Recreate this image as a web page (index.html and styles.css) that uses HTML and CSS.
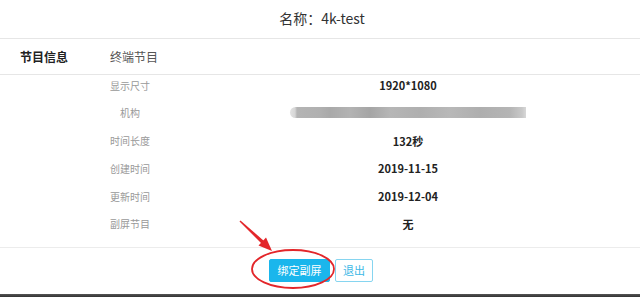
FILE: index.html
```html
<!DOCTYPE html>
<html lang="zh-CN">
<head>
<meta charset="utf-8">
<title>名称：4k-test</title>
<link rel="stylesheet" href="styles.css">
</head>
<body>
<div class="dialog">
  <div class="header">名称：4k-test</div>
  <div class="section">
    <span class="section-title">节目信息</span>
    <span class="section-sub">终端节目</span>
  </div>
  <div class="list">
    <div class="row"><span class="label">显示尺寸</span><span class="value">1920*1080</span></div>
    <div class="row"><span class="label">机构</span><span class="value"><span class="blur"></span></span></div>
    <div class="row"><span class="label">时间长度</span><span class="value">132秒</span></div>
    <div class="row"><span class="label">创建时间</span><span class="value">2019-11-15</span></div>
    <div class="row"><span class="label">更新时间</span><span class="value">2019-12-04</span></div>
    <div class="row"><span class="label">副屏节目</span><span class="value">无</span></div>
  </div>
  <div class="footer">
    <button class="btn btn-primary">绑定副屏</button>
    <button class="btn btn-ghost">退出</button>
  </div>
  <div class="shadow-bar"></div>
  <svg class="annot" width="640" height="297" viewBox="0 0 640 297">
    <ellipse cx="293" cy="269" rx="41" ry="19" fill="none" stroke="#e3262a" stroke-width="1.8"/>
    <polygon points="239.5,221.5 240.5,220.5 264,241 262,244" fill="#e3262a"/>
    <polygon points="272,251 258.5,245.5 266,237.5" fill="#e3262a"/>
  </svg>
</div>
</body>
</html>
```
FILE: styles.css
```css
* { box-sizing: border-box; }
html, body {
  margin: 0;
  padding: 0;
  background: #fff;
}
body {
  width: 640px;
  height: 297px;
  overflow: hidden;
  font-family: "Noto Sans CJK SC", "Noto Sans", sans-serif;
}
.dialog {
  position: relative;
  width: 640px;
  height: 297px;
  display: flex;
  flex-direction: column;
}
.header {
  height: 39px;
  border-bottom: 1px solid #e6e6e6;
  display: flex;
  align-items: center;
  justify-content: center;
  font-size: 14px;
  color: #333;
  padding-bottom: 3px;
  padding-left: 4px;
}
.section {
  height: 36px;
  border-bottom: 1px solid #e6e6e6;
  display: flex;
  align-items: center;
  padding-left: 20px;
}
.section-title {
  font-size: 12px;
  font-weight: bold;
  color: #222;
  width: 90px;
}
.section-sub {
  font-size: 12px;
  color: #555;
}
.list {
  display: flex;
  flex-direction: column;
  gap: 7.8px;
  padding-bottom: 13px;
  border-bottom: 1px solid #ececec;
}
.row {
  display: grid;
  grid-template-columns: 110px 40px 108px 300px;
  height: 20px;
  align-items: center;
}
.label {
  grid-column: 2;
  font-size: 10px;
  color: #999;
  text-align: center;
  white-space: nowrap;
}
.value {
  grid-column: 4;
  font-size: 11px;
  font-weight: bold;
  color: #222;
  text-align: center;
  display: flex;
  justify-content: center;
}
.blur {
  display: block;
  width: 236px;
  height: 11px;
  border-radius: 6px 0 0 6px;
  background: linear-gradient(90deg,
    #e2e2e2 0px, #d6d6d6 5px, #b4b4b4 7px, #b0b0b0 30px, #a9a9a9 40px,
    #b3b3b3 60px, #a5a5a5 80px, #b6b6b6 100px, #afafaf 130px, #b8b8b8 160px,
    #aeaeae 190px, #b5b5b5 220px, #c8c8c8 232px, #d8d8d8 236px);
}
.footer {
  flex: 1;
  display: flex;
  justify-content: center;
  align-items: flex-start;
  gap: 5px;
  padding-top: 11px;
  padding-left: 2px;
}
.btn {
  height: 23px;
  font-family: "Noto Sans CJK SC", sans-serif;
  font-size: 11px;
  border-radius: 2px;
  padding: 0;
  display: flex;
  align-items: center;
  justify-content: center;
}
.btn-primary {
  width: 61px;
  background: #1ab6ec;
  border: 1px solid #1ab6ec;
  color: #fff;
}
.btn-ghost {
  width: 38px;
  background: #fff;
  border: 1px solid #86d5f0;
  color: #3cb8e6;
}
.shadow-bar {
  height: 3px;
  background: linear-gradient(180deg, #555 0%, #333 100%);
}
.annot {
  position: absolute;
  left: 0;
  top: 0;
  pointer-events: none;
}
```
